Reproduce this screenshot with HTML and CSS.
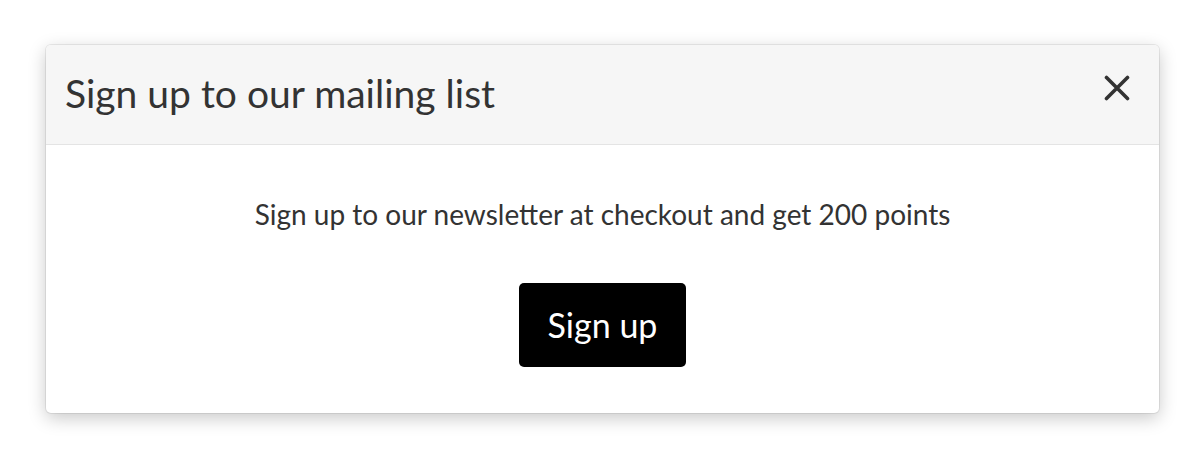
FILE: index.html
```html
<!DOCTYPE html>
<html lang="en">
<head>
  <meta charset="UTF-8" />
  <title>Mailing list</title>
  <link rel="stylesheet" href="styles.css">
</head>
<body>
  <div class="modal">
    <div class="modal-header">
      <h2 class="modal-title">Sign up to our mailing list</h2>
      <button class="close" aria-label="Close">
        <svg width="26" height="26" viewBox="0 0 26 26"><path d="M2.5 2.5 L23.5 23.5 M23.5 2.5 L2.5 23.5" stroke="#333" stroke-width="3.6" stroke-linecap="round" fill="none"/></svg>
      </button>
    </div>
    <div class="modal-body">
      <p class="lead">Sign up to our newsletter at checkout and get 200 points</p>
      <button class="btn">Sign up</button>
    </div>
  </div>
</body>
</html>
```
FILE: styles.css
```css
html, body {
  min-height: 100%;
}
body {
  margin: 0;
  padding: 45px 0 60px 46px;
  background: #fff;
  font-family: Lato, "Open Sans", sans-serif;
  color: #333;
}
.modal {
  width: 1113px;
  background: #fff;
  border-radius: 5px;
  box-shadow: 0 0 0 1px rgba(0,0,0,0.07), 0 5px 18px rgba(0,0,0,0.22);
  overflow: hidden;
}
.modal-header {
  display: flex;
  justify-content: space-between;
  align-items: flex-start;
  background: #f6f6f6;
  border-bottom: 1px solid #e4e4e4;
  padding: 24.5px 29px 27.5px 19px;
}
.modal-title {
  margin: 0;
  font-size: 39px;
  font-weight: 400;
  line-height: 47px;
  color: #333;
}
.close {
  margin-top: 5.5px;
  padding: 0;
  border: 0;
  background: none;
  line-height: 0;
  cursor: pointer;
}
.modal-body {
  display: flex;
  flex-direction: column;
  align-items: center;
  padding: 53px 20px 46px;
}
.lead {
  margin: 0 0 51.4px;
  font-size: 28px;
  line-height: 33.6px;
  color: #333;
}
.btn {
  height: 84px;
  padding: 0 28.5px;
  border: 0;
  border-radius: 5px;
  background: #000;
  color: #fff;
  font-family: inherit;
  font-size: 34px;
  line-height: 84px;
}
```
